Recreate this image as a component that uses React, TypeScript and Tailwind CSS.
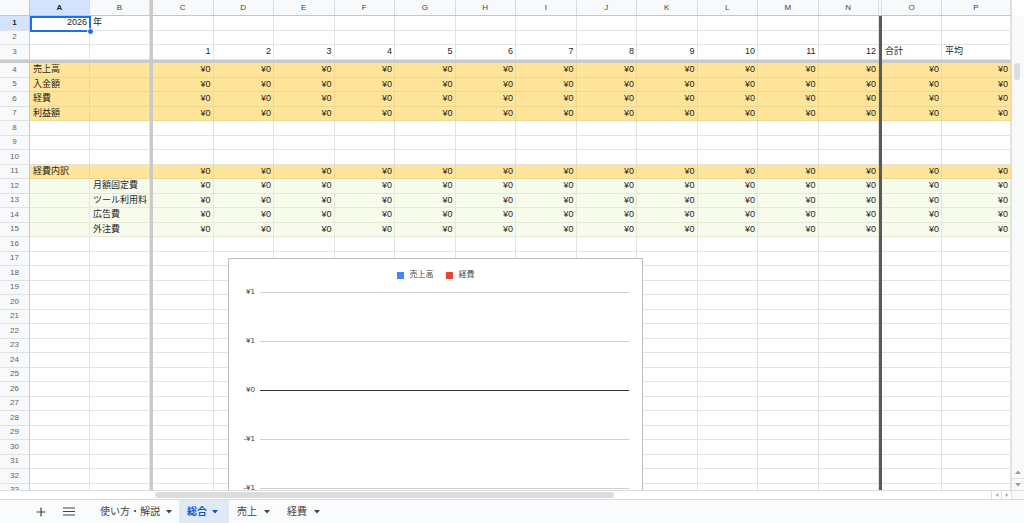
import React from "react";

const GRID =
  "grid grid-cols-[30px_60px_60px_3px_repeat(12,minmax(0,1fr))_3px_60px_69px]";

const LETTERS = "ABCDEFGHIJKLMNOP".split("");

type Fill = "none" | "orange" | "green";

const FILL: Record<Fill, string> = {
  none: "bg-white border-[#e2e3e3]",
  orange: "bg-[#ffe599] border-[#f0d693]",
  green: "bg-[#f7fbec] border-[#e4ead6]",
};

const yen = Array(14).fill("¥0");
const months = Array.from({ length: 12 }, (_, i) => String(i + 1));

type RowData = { n: number; cells: string[]; fill?: Fill };

const top: RowData[] = [
  { n: 1, cells: ["2026", "年"] },
  { n: 2, cells: [] },
  { n: 3, cells: ["", "", ...months, "合計", "平均"] },
];

const body: RowData[] = [
  { n: 4, cells: ["売上高", "", ...yen], fill: "orange" },
  { n: 5, cells: ["入金額", "", ...yen], fill: "orange" },
  { n: 6, cells: ["経費", "", ...yen], fill: "orange" },
  { n: 7, cells: ["利益額", "", ...yen], fill: "orange" },
  { n: 8, cells: [] },
  { n: 9, cells: [] },
  { n: 10, cells: [] },
  { n: 11, cells: ["経費内訳", "", ...yen], fill: "orange" },
  { n: 12, cells: ["", "月額固定費", ...yen], fill: "green" },
  { n: 13, cells: ["", "ツール利用料", ...yen], fill: "green" },
  { n: 14, cells: ["", "広告費", ...yen], fill: "green" },
  { n: 15, cells: ["", "外注費", ...yen], fill: "green" },
  ...Array.from({ length: 19 }, (_, i) => ({ n: 16 + i, cells: [] })),
];

function Cell({ text, fill }: { text: string; fill: Fill }) {
  const right = /^[¥\d]/.test(text);
  return (
    <div
      className={`flex items-center overflow-hidden whitespace-nowrap border-r border-b pl-[3px] pr-[2px] text-[9px] leading-none text-[#1f1f1f] ${FILL[fill]} ${
        right ? "justify-end" : ""
      }`}
    >
      {text}
    </div>
  );
}

function Row({ n, cells, fill = "none" }: RowData) {
  const c = (i: number) => cells[i] ?? "";
  return (
    <div className={`${GRID} h-[14.5px]`}>
      <div
        className={`flex items-center justify-center border-r border-b border-r-[#c4c7c5] border-b-[#e1e1e1] text-[8px] leading-none ${
          n === 1 ? "bg-[#d3e3fd] font-semibold text-[#1f1f1f]" : "bg-[#f8f9fa] text-[#5f6368]"
        }`}
      >
        {n}
      </div>
      <Cell text={c(0)} fill={fill} />
      <Cell text={c(1)} fill={fill} />
      <div className="bg-[#cacaca]" />
      {months.map((_, i) => (
        <Cell key={i} text={c(i + 2)} fill={fill} />
      ))}
      <div className="bg-[#5a5a5a]" />
      <Cell text={c(14)} fill={fill} />
      <Cell text={c(15)} fill={fill} />
    </div>
  );
}

function Caret({ className = "" }: { className?: string }) {
  return (
    <svg width="6" height="4" viewBox="0 0 6 4" className={className}>
      <path d="M0 0h6L3 3.5z" fill="currentColor" />
    </svg>
  );
}

function Chart() {
  const ticks = ["¥1", "¥1", "¥0", "-¥1", "-¥1"];
  return (
    <div className="absolute left-[228px] top-[258px] h-[260px] w-[415px] border border-[#bdbdbd] bg-white">
      <div className="mt-[11px] flex h-[10px] items-center justify-center gap-[6px] text-[8px] leading-none text-[#444]">
        <span className="h-[7px] w-[7px] bg-[#4285f4]" />
        <span>売上高</span>
        <span className="ml-[6px] h-[7px] w-[7px] bg-[#ea4335]" />
        <span>経費</span>
      </div>
      <div className="mt-[7px] flex flex-col gap-[39px]">
        {ticks.map((t, i) => (
          <div key={i} className="flex h-[10px] items-center">
            <span className="w-[26px] text-right text-[8px] leading-none text-[#444]">{t}</span>
            <span className={`ml-[5px] h-px w-[369px] ${t === "¥0" ? "bg-[#333]" : "bg-[#d0d0d0]"}`} />
          </div>
        ))}
      </div>
    </div>
  );
}

export default function App() {
  return (
    <main className="flex h-[523px] w-[1024px] flex-col overflow-hidden bg-white font-['Liberation_Sans','Noto_Sans_CJK_JP',sans-serif]">
      <div className="flex h-[490px]">
        <div className="relative w-[1011px] overflow-hidden">
          <div className={`${GRID} h-[16px] border-b border-[#c4c7c5] bg-[#f8f9fa] text-[8px] leading-none text-[#444]`}>
            <div className="border-r border-[#c4c7c5]" />
            {LETTERS.map((l, i) => (
              <React.Fragment key={l}>
                <div
                  className={`flex items-center justify-center border-r border-[#dadce0] ${
                    i === 0 ? "bg-[#d3e3fd] font-semibold text-[#1f1f1f]" : ""
                  }`}
                >
                  {l}
                </div>
                {i === 1 && <div className="bg-[#cacaca]" />}
                {i === 13 && <div className="border-r border-[#dadce0]" />}
              </React.Fragment>
            ))}
          </div>
          {top.map((r) => (
            <Row key={r.n} {...r} />
          ))}
          <div className={`${GRID} h-[3.5px] bg-[#cacaca]`}>
            <div className="col-span-16" />
            <div className="bg-[#5a5a5a]" />
          </div>
          {body.map((r) => (
            <Row key={r.n} {...r} />
          ))}

          <div className="absolute left-[30px] top-[16px] h-[15.5px] w-[61px] border-2 border-[#1a73e8]" />
          <div className="absolute left-[87px] top-[28px] h-[7px] w-[7px] rounded-full border border-white bg-[#1a73e8]" />

          <Chart />
        </div>
        <div className="flex w-[13px] flex-col border-l border-[#e0e0e0] bg-[#f8f9fa]">
          <div className="h-[16px] bg-white" />
          <div className="ml-[2px] mt-[47px] h-[17px] w-[6px] rounded-full bg-[#dadce0]" />
          <div className="mt-auto flex flex-col items-center pb-[3px] text-[#9aa0a6]">
            <Caret className="rotate-180" />
            <div className="my-[4px] h-px w-full bg-[#e0e0e0]" />
            <Caret />
          </div>
        </div>
      </div>

      <div className="flex h-[10px] items-center border-y border-[#dadce0] bg-white">
        <div className="ml-[155px] h-[6px] w-[459px] rounded-full bg-[#dadce0]" />
        <div className="ml-auto flex h-full items-center text-[#9aa0a6]">
          <div className="flex h-full w-[10px] items-center justify-center border-l border-[#e0e0e0]">
            <Caret className="rotate-90 scale-75" />
          </div>
          <div className="flex h-full w-[10px] items-center justify-center border-l border-[#e0e0e0]">
            <Caret className="-rotate-90 scale-75" />
          </div>
          <div className="h-full w-[13px] border-l border-[#e0e0e0] bg-[#f8f9fa]" />
        </div>
      </div>

      <div className="flex h-[23px] items-stretch bg-[#f9fbfd] text-[10px] leading-none text-[#444]">
        <div className="ml-[36px] flex items-center">
          <svg width="10" height="10" viewBox="0 0 10 10">
            <path d="M5 0.5v9M0.5 5h9" stroke="#444" strokeWidth="1.2" />
          </svg>
        </div>
        <div className="ml-[17px] flex items-center">
          <svg width="12" height="9" viewBox="0 0 12 9">
            <path d="M0 1h12M0 4.5h12M0 8h12" stroke="#444" strokeWidth="1.2" />
          </svg>
        </div>
        <div className="ml-[17px] flex items-center gap-[6px] pl-[8px] pr-[7px]">
          <span>使い方・解説</span>
          <Caret />
        </div>
        <div className="flex items-center gap-[5px] bg-[#e1e9f7] pl-[8px] pr-[11px] font-bold text-[#0b57d0]">
          <span>総合</span>
          <Caret />
        </div>
        <div className="flex items-center gap-[7px] pl-[8px] pr-[9px]">
          <span>売上</span>
          <Caret />
        </div>
        <div className="flex items-center gap-[7px] pl-[8px] pr-[9px]">
          <span>経費</span>
          <Caret />
        </div>
      </div>
    </main>
  );
}
